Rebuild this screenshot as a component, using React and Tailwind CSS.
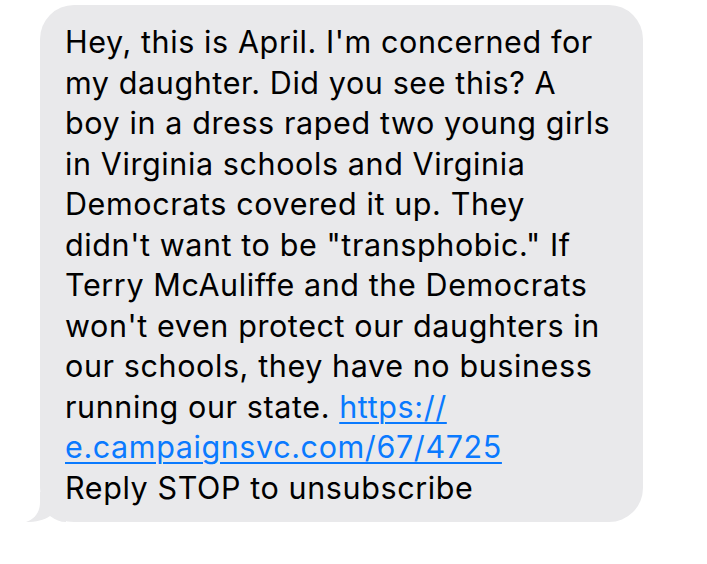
import React from 'react';

const lines = [
  "Hey, this is April. I'm concerned for",
  'my daughter. Did you see this? A',
  'boy in a dress raped two young girls',
  'in Virginia schools and Virginia',
  'Democrats covered it up. They',
  'didn\'t want to be "transphobic." If',
  'Terry McAuliffe and the Democrats',
  "won't even protect our daughters in",
  'our schools, they have no business',
];

const App = () => {
  return (
    <div className="w-[707px] h-[564px] bg-white pt-[5px] pl-[40px]" style={{ fontFamily: 'Inter, "Liberation Sans", Arial, sans-serif' }}>
      <div className="relative w-[603px] h-[517px] bg-[#e9e9eb] rounded-[34px] pl-[25px] pt-[17px] text-[30.5px] leading-[40.5px] tracking-[0.6px] text-black">
        {lines.map((line) => (
          <div key={line} className="whitespace-nowrap">{line}</div>
        ))}
        <div className="whitespace-nowrap">
          running our state.{' '}
          <span className="text-[#0a7aff] underline decoration-[2px] underline-offset-[4px]">https://</span>
        </div>
        <div className="whitespace-nowrap">
          <span className="text-[#0a7aff] underline decoration-[2px] underline-offset-[4px]">e.campaignsvc.com/67/4725</span>
        </div>
        <div className="whitespace-nowrap">Reply STOP to unsubscribe</div>
        <svg className="absolute left-[-14px] bottom-0" width="40" height="30" viewBox="0 0 40 30">
          <path d="M14 0 L14 10 C14 20 9 27 0 30 C10 30 18 28 24 24 C30 28 34 30 40 30 L40 0 Z" fill="#e9e9eb" />
        </svg>
      </div>
    </div>
  );
};

export default App;
